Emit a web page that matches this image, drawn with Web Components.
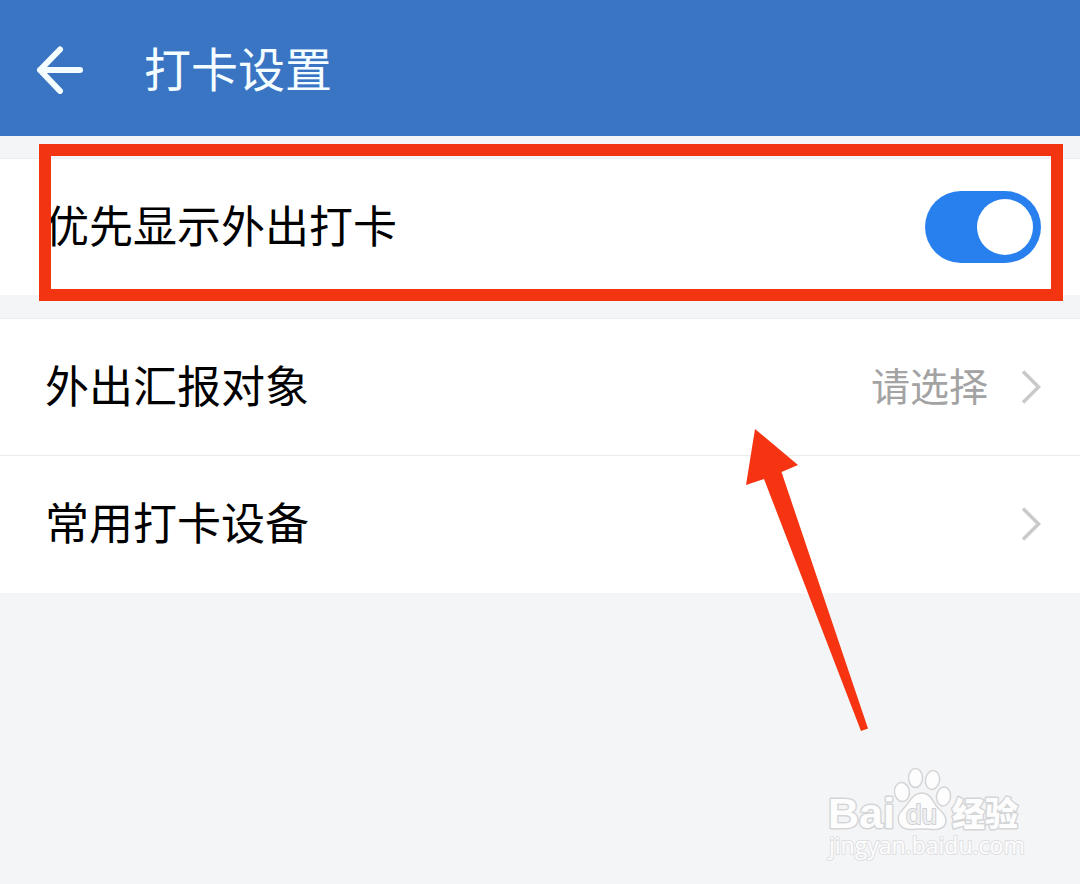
<!DOCTYPE html>
<html lang="zh-CN">
<head>
<meta charset="utf-8">
<meta name="viewport" content="width=device-width, initial-scale=1">
<title>打卡设置</title>
<style>
  html, body { margin: 0; }
  body { font-family: "Noto Sans CJK SC", sans-serif; background: #f4f5f7; color: #000; }
</style>
</head>
<body>
<settings-page>
  <nav-bar slot="header">打卡设置</nav-bar>
  <setting-group>
    <switch-row checked>优先显示外出打卡</switch-row>
    <highlight-frame slot="overlay"></highlight-frame>
  </setting-group>
  <setting-group>
    <link-row value="请选择">外出汇报对象</link-row>
    <link-row last>常用打卡设备</link-row>
    <pointer-arrow slot="overlay"></pointer-arrow>
  </setting-group>
  <site-watermark slot="footer"></site-watermark>
</settings-page>

<script>
const define = (name, html, setup) => {
  const template = document.createElement('template');
  template.innerHTML = html;
  customElements.define(name, class extends HTMLElement {
    constructor() {
      super();
      this.attachShadow({ mode: 'open' }).append(template.content.cloneNode(true));
    }
    connectedCallback() { if (setup) setup(this, this.shadowRoot); }
  });
};

define('settings-page', `
  <style>
    :host { display: flex; flex-direction: column; min-height: 100vh; }
    main { display: flex; flex-direction: column; gap: 24px; padding-top: 23px; }
    footer { display: flex; justify-content: flex-end; margin-top: auto; padding: 24px 52px 20px; }
  </style>
  <slot name="header"></slot>
  <main><slot></slot></main>
  <footer><slot name="footer"></slot></footer>
`);

define('nav-bar', `
  <style>
    :host { display: block; background: #3a75c4; color: #f4fdff; }
    header { display: flex; align-items: center; gap: 60px; height: 136px; padding: 0 36px; }
    button { display: flex; padding: 4px 0 0; border: 0; background: none; color: inherit; cursor: pointer; }
    h1 { margin: 0; padding-bottom: 2px; font-size: 47px; line-height: 56px; font-weight: 400; }
  </style>
  <header>
    <button type="button" aria-label="返回">
      <svg width="48" height="48" viewBox="0 0 48 48" fill="none" stroke="currentColor" stroke-width="6" stroke-linecap="round" stroke-linejoin="round"><path d="M24 3.500 4 24 24 45M4 24H44"/></svg>
    </button>
    <h1><slot></slot></h1>
  </header>
`);

define('setting-group', `
  <style>
    :host { display: block; position: relative; background: #fff; box-shadow: 0 -1px #eceef0; }
  </style>
  <slot></slot><slot name="overlay"></slot>
`);

define('switch-row', `
  <style>
    :host { display: block; }
    div { display: flex; align-items: center; justify-content: space-between; height: 136px; padding: 0 39px 0 45px; }
    label { padding-bottom: 6px; font-size: 44px; line-height: 56px; }
    input { appearance: none; display: flex; align-items: center; width: 116px; height: 72px; margin: 0; padding: 0 8px; box-sizing: border-box; border-radius: 36px; background: #c8c8c8; }
    input::before { content: ""; width: 56px; height: 56px; border-radius: 50%; background: #fff; }
    input:checked { justify-content: flex-end; background: #2880ee; }
  </style>
  <div><label for="toggle"><slot></slot></label><input id="toggle" type="checkbox" role="switch"></div>
`, (host, root) => { root.querySelector('input').checked = host.hasAttribute('checked'); });

define('link-row', `
  <style>
    :host { display: block; border-bottom: 1px solid #ebebeb; }
    :host([last]) { border-bottom-color: #fff; }
    a { display: flex; align-items: center; height: 136px; padding: 0 39px 0 45px; color: inherit; text-decoration: none; font-size: 44px; line-height: 56px; }
    span { padding-bottom: 6px; }
    .value { margin-left: auto; margin-right: 33px; font-size: 39px; color: #a3a3a3; }
    svg { flex: none; }
  </style>
  <a href="#"><span><slot></slot></span><span class="value"></span>
    <svg width="20" height="34" viewBox="0 0 20 34" fill="none" stroke="#c9c9c9" stroke-width="3.500"><path d="M2 1.500 17.500 17 2 32.500"/></svg>
  </a>
`, (host, root) => { root.querySelector('.value').textContent = host.getAttribute('value') || ''; });

define('highlight-frame', `
  <style>
    :host { position: absolute; inset: -15px 17px -6px 39px; border: 12px solid #f23411; pointer-events: none; }
  </style>
`);

define('pointer-arrow', `
  <style>
    :host { position: absolute; top: 101px; right: 200px; pointer-events: none; }
    svg { display: block; }
  </style>
  <svg width="140" height="320" viewBox="0 0 140 320"><path fill="#f63411" d="M15 9 58 45 41.500 52 128 308.500 121 311 24 59 6 65Z"/></svg>
`);

define('site-watermark', `
  <style>
    :host { display: block; }
    svg { display: block; overflow: visible; }
    text { paint-order: stroke; }
    .brand { font: 700 43px "Liberation Sans", sans-serif; }
    .paw { font: 400 28px "Liberation Sans", sans-serif; fill: #eeeff1; stroke: #cfd0d2; }
    .cjk { font: 900 33px "Noto Sans CJK SC", sans-serif; }
    .url { font: 400 23px "Open Sans", sans-serif; }
  </style>
  <svg width="200" height="96" viewBox="0 0 200 96" fill="#fdfdfd" stroke="#d4d5d7" stroke-width="3" stroke-linejoin="round">
    <text class="brand" x="0" y="60">Bai</text>
    <g stroke-width="1.500">
      <ellipse cx="74" cy="24" rx="7.500" ry="9.500" transform="rotate(-8 74 24)"/>
      <ellipse cx="87.500" cy="10" rx="7" ry="9.500"/>
      <ellipse cx="104.500" cy="12" rx="7" ry="9.500" transform="rotate(10 104.500 12)"/>
      <ellipse cx="115.500" cy="28.500" rx="7" ry="9.500" transform="rotate(8 115.500 28.500)"/>
      <path d="M94 25C84 25 82 34 76 40 70 46 69 50 71 55 75 64 84 61 94 61S112 64 117 57C120 51 117 46 111 41 105 36 104 25 94 25Z"/>
    </g>
    <text class="paw" stroke-width="2" x="78" y="56">du</text>
    <text class="cjk" x="124" y="58">经验</text>
    <text class="url" x="1" y="86" stroke="#dfe0e2" stroke-width="2">jingyan.baidu.com</text>
  </svg>
`);
</script>
</body>
</html>
